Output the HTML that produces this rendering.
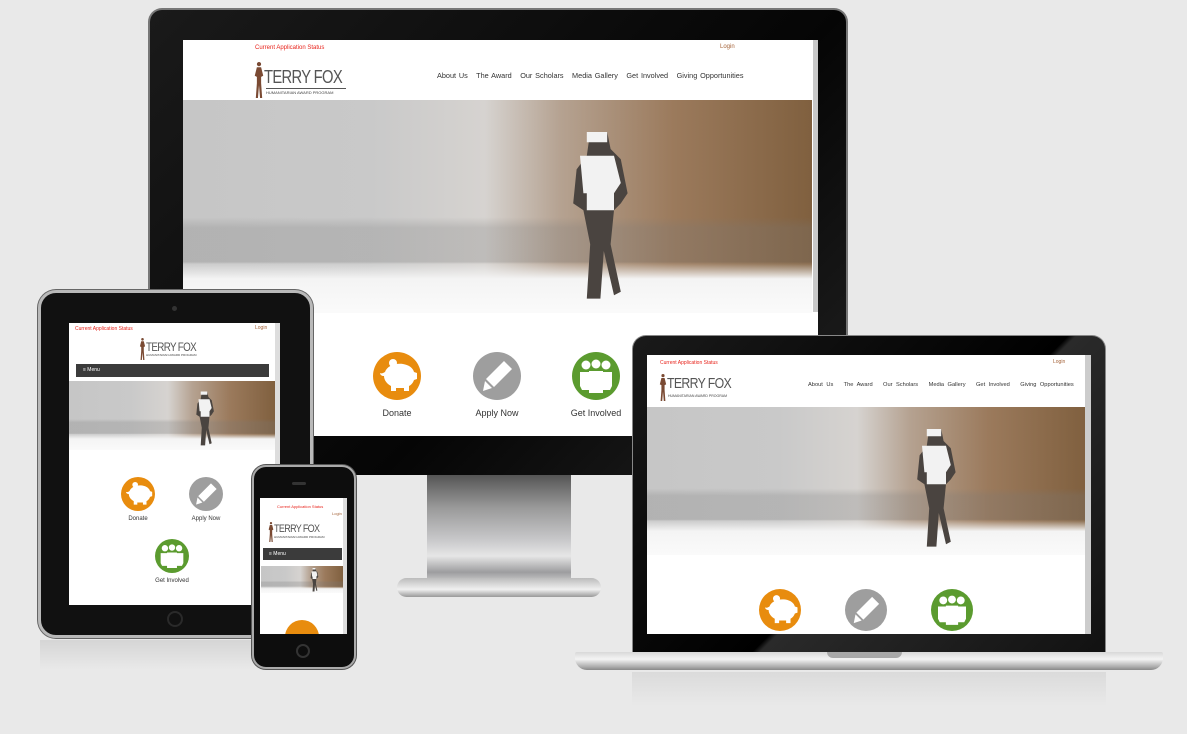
<!DOCTYPE html>
<html><head><meta charset="utf-8"><style>
*{margin:0;padding:0;box-sizing:border-box}
body{width:1187px;height:734px;background:#e9e9e9;position:relative;overflow:hidden;font-family:"Liberation Sans",sans-serif}
.a{position:absolute}
.scr{position:absolute;background:#fff;overflow:hidden}
.hero{position:absolute;overflow:hidden;background:
 linear-gradient(180deg,rgba(255,255,255,0) 0%,rgba(255,255,255,0) 76%,rgba(244,244,244,1) 84%,#fafafa 100%),
 linear-gradient(180deg,rgba(0,0,0,0) 0%,rgba(0,0,0,0) 55%,rgba(120,120,120,.25) 60%,rgba(120,120,120,.25) 76%,rgba(0,0,0,0) 77%),
 linear-gradient(90deg,#c6c6c6 0%,#c9c9c9 30%,#d6d3d0 48%,#b5a291 60%,#9b7a5c 78%,#80603f 100%);}
.red{color:#e8231b;position:absolute;white-space:nowrap}
.login{color:#a5643a;position:absolute;white-space:nowrap}
.nav{position:absolute;color:#333;white-space:nowrap}
.c{position:absolute;border-radius:50%}
.lbl{position:absolute;color:#333;text-align:center;white-space:nowrap}
.logo{position:absolute}
.tf{position:absolute;color:#555;letter-spacing:-0.8px;white-space:nowrap;transform-origin:0 0}
</style></head><body>
<svg width="0" height="0" style="position:absolute">
<defs>
<symbol id="pig" viewBox="0 0 48 48"><path fill="#fff" d="M12 20c2-6 10-9 18-8 6 1 10 4 11 8l3 1v6l-3 1c-1 3-3 5-5 6v5h-5v-3h-8v3h-5v-5c-4-2-7-6-7-10-2 0-4-1-4-3 2 1 3 0 5-1z"/><circle cx="20" cy="11" r="4" fill="#fff"/></symbol>
<symbol id="pen" viewBox="0 0 48 48"><path fill="#fff" d="M31 9l8 8-18 18-8-8zM12 29l7 7-9 3z"/></symbol>
<symbol id="ppl" viewBox="0 0 48 48"><g fill="#fff"><circle cx="14" cy="13" r="4.5"/><circle cx="24" cy="12" r="4.5"/><circle cx="34" cy="13" r="4.5"/><path d="M8 20h10v18H10l-2-4zM30 20h10v14l-2 4h-8zM17 19h14v22H17z"/></g></symbol>
<symbol id="fig" viewBox="0 0 10 34"><path fill="#7a4a33" d="M5 0a2 2 0 1 1 0 4 2 2 0 1 1 0-4zM3 5h4l2 8-2 1v6l1 14H6l-1-12-1 12H2l1-14v-6L1 13z"/></symbol>
<symbol id="stat" viewBox="0 0 20 50"><path fill="#4a4440" d="M8 0h5l1 5 3 3 2 10-2 3-2 2-1 10 3 14-2 1-3-13-1 14H7l1-16-2-10-3-2 1-10 3-4z"/><path fill="#f2f2f2" d="M7 0h6v3H7zM5 7h10l2 8-2 3H6zM7 18h8v5H7z"/></symbol>
</defs></svg>

<!-- reflections -->
<div class="a" style="left:40px;top:640px;width:272px;height:30px;background:linear-gradient(180deg,rgba(200,200,200,.6),rgba(233,233,233,0))"></div>
<div class="a" style="left:632px;top:672px;width:474px;height:34px;background:linear-gradient(180deg,rgba(215,215,215,.8),rgba(233,233,233,0))"></div>

<!-- MONITOR -->
<div class="a" style="left:148px;top:8px;width:700px;height:467px;background:linear-gradient(135deg,#1a1a1a,#050505 60%,#222);border-radius:14px 14px 0 0;border:2px solid #777;border-bottom:none"></div>
<div class="a" style="left:427px;top:475px;width:144px;height:108px;background:linear-gradient(180deg,#555 0%,#999 30%,#c8c8ca 60%,#e6e6e6 75%,#9d9d9f 90%,#cfcfcf 100%)"></div>
<div class="a" style="left:397px;top:578px;width:204px;height:19px;border-radius:10px;background:linear-gradient(180deg,#bbb,#f0f0f0 60%,#999)"></div>
<div class="scr" style="left:183px;top:40px;width:635px;height:396px">
 <div class="red" style="left:72px;top:5px;font-size:6px">Current Application Status</div>
 <div class="login" style="left:537px;top:4px;font-size:6px">Login</div>
 <svg class="logo" style="left:70px;top:22px" width="12" height="36"><use href="#fig"/></svg>
 <div class="tf" style="left:81px;top:27px;font-size:18px;transform:scaleX(.82)">TERRY FOX</div>
 <div class="a" style="left:83px;top:48px;width:80px;height:1px;background:#555"></div>
 <div class="a" style="left:83px;top:50px;font-size:4px;color:#444;white-space:nowrap">HUMANITARIAN AWARD PROGRAM</div>
 <div class="nav" style="left:254px;top:31px;font-size:7.3px;word-spacing:0.8px">About Us &nbsp; The Award &nbsp; Our Scholars &nbsp; Media Gallery &nbsp; Get Involved &nbsp; Giving Opportunities</div>
 <div class="hero" style="left:0;top:60px;width:629px;height:213px"></div>
 <svg class="a" style="left:378px;top:92px" width="72" height="170"><use href="#stat"/></svg>
 <div class="a" style="left:630px;top:0;width:5px;height:272px;background:#c8c8c8"></div>
 <div class="c" style="left:190px;top:312px;width:48px;height:48px;background:#e88c0e"><svg width="48" height="48"><use href="#pig"/></svg></div>
 <div class="c" style="left:290px;top:312px;width:48px;height:48px;background:#9e9e9e"><svg width="48" height="48"><use href="#pen"/></svg></div>
 <div class="c" style="left:389px;top:312px;width:48px;height:48px;background:#5b9b2f"><svg width="48" height="48"><use href="#ppl"/></svg></div>
 <div class="lbl" style="left:184px;top:368px;width:60px;font-size:9px">Donate</div>
 <div class="lbl" style="left:284px;top:368px;width:60px;font-size:9px">Apply Now</div>
 <div class="lbl" style="left:380px;top:368px;width:66px;font-size:9px">Get Involved</div>
</div>

<!-- TABLET -->
<div class="a" style="left:38px;top:290px;width:275px;height:348px;border-radius:18px;background:#111;border:3px solid #b9b9b9;box-shadow:0 0 0 1px #666"></div>
<div class="a" style="left:172px;top:306px;width:5px;height:5px;border-radius:50%;background:#333"></div>
<div class="a" style="left:167px;top:611px;width:16px;height:16px;border-radius:50%;border:2px solid #2a2a2a"></div>
<div class="scr" style="left:69px;top:323px;width:211px;height:282px">
 <div class="red" style="left:6px;top:3px;font-size:5px">Current Application Status</div>
 <div class="login" style="left:186px;top:2px;font-size:5px">Login</div>
 <svg class="logo" style="left:70px;top:15px" width="7" height="22"><use href="#fig"/></svg>
 <div class="tf" style="left:77px;top:17px;font-size:12px;transform:scaleX(.82)">TERRY FOX</div>
 <div class="a" style="left:77px;top:30px;font-size:3px;color:#444;white-space:nowrap">HUMANITARIAN AWARD PROGRAM</div>
 <div class="a" style="left:7px;top:41px;width:193px;height:13px;background:#3b3b3b;color:#fff;font-size:5px;padding:3px 0 0 7px">≡ Menu</div>
 <div class="hero" style="left:0;top:58px;width:206px;height:69px"></div>
 <svg class="a" style="left:124px;top:68px" width="22" height="56"><use href="#stat"/></svg>
 <div class="a" style="left:206px;top:0;width:5px;height:282px;background:#ddd"></div>
 <div class="c" style="left:52px;top:154px;width:34px;height:34px;background:#e88c0e"><svg width="34" height="34"><use href="#pig"/></svg></div>
 <div class="c" style="left:120px;top:154px;width:34px;height:34px;background:#9e9e9e"><svg width="34" height="34"><use href="#pen"/></svg></div>
 <div class="c" style="left:86px;top:216px;width:34px;height:34px;background:#5b9b2f"><svg width="34" height="34"><use href="#ppl"/></svg></div>
 <div class="lbl" style="left:44px;top:193px;width:50px;font-size:6px">Donate</div>
 <div class="lbl" style="left:112px;top:193px;width:50px;font-size:6px">Apply Now</div>
 <div class="lbl" style="left:78px;top:255px;width:50px;font-size:6px">Get Involved</div>
</div>

<!-- PHONE -->
<div class="a" style="left:252px;top:465px;width:104px;height:204px;border-radius:14px;background:#0d0d0d;border:2px solid #aaa;box-shadow:0 0 0 1px #555"></div>
<div class="a" style="left:292px;top:482px;width:14px;height:3px;border-radius:2px;background:#333"></div>
<div class="a" style="left:296px;top:644px;width:14px;height:14px;border-radius:50%;border:2px solid #333"></div>
<div class="scr" style="left:260px;top:498px;width:87px;height:136px">
 <div class="red" style="left:17px;top:6px;font-size:4px">Current Application Status</div>
 <div class="login" style="left:72px;top:13px;font-size:4px">Login</div>
 <svg class="logo" style="left:8px;top:24px" width="6" height="20"><use href="#fig"/></svg>
 <div class="tf" style="left:14px;top:25px;font-size:11px;transform:scaleX(.82)">TERRY FOX</div>
 <div class="a" style="left:14px;top:37px;font-size:3px;color:#444;white-space:nowrap">HUMANITARIAN AWARD PROGRAM</div>
 <div class="a" style="left:3px;top:50px;width:79px;height:12px;background:#3b3b3b;color:#fff;font-size:5px;padding:3px 0 0 6px">≡ Menu</div>
 <div class="hero" style="left:1px;top:68px;width:82px;height:27px"></div>
 <svg class="a" style="left:49px;top:70px" width="10" height="24"><use href="#stat"/></svg>
 <div class="a" style="left:83px;top:0;width:4px;height:136px;background:#ddd"></div>
 <div class="c" style="left:25px;top:122px;width:34px;height:34px;background:#e88c0e"></div>
</div>

<!-- LAPTOP -->
<div class="a" style="left:632px;top:335px;width:474px;height:320px;border-radius:14px 14px 0 0;background:linear-gradient(135deg,#1a1a1a,#000 55%,#2a2a2a 56%,#111);border:1px solid #888;border-bottom:none"></div>
<div class="a" style="left:575px;top:652px;width:588px;height:18px;border-radius:2px 2px 12px 12px;background:linear-gradient(180deg,#d8d8d8,#f4f4f4 40%,#b0b0b0 80%,#888)"></div>
<div class="a" style="left:827px;top:652px;width:75px;height:6px;border-radius:0 0 6px 6px;background:#a8a8a8"></div>
<div class="scr" style="left:647px;top:355px;width:444px;height:279px">
 <div class="red" style="left:13px;top:5px;font-size:5px">Current Application Status</div>
 <div class="login" style="left:406px;top:4px;font-size:5px">Login</div>
 <svg class="logo" style="left:12px;top:19px" width="8" height="27"><use href="#fig"/></svg>
 <div class="tf" style="left:20px;top:20px;font-size:15px;transform:scaleX(.82)">TERRY FOX</div>
 <div class="a" style="left:21px;top:39px;font-size:3.5px;color:#444;white-space:nowrap">HUMANITARIAN AWARD PROGRAM</div>
 <div class="nav" style="left:161px;top:27px;font-size:5.7px;word-spacing:1.9px">About Us &nbsp; The Award &nbsp; Our Scholars &nbsp; Media Gallery &nbsp; Get Involved &nbsp; Giving Opportunities</div>
 <div class="hero" style="left:0;top:52px;width:438px;height:148px"></div>
 <svg class="a" style="left:262px;top:74px" width="50" height="120"><use href="#stat"/></svg>
 <div class="a" style="left:438px;top:0;width:6px;height:279px;background:#ccc"></div>
 <div class="c" style="left:112px;top:234px;width:42px;height:42px;background:#e88c0e"><svg width="42" height="42"><use href="#pig"/></svg></div>
 <div class="c" style="left:198px;top:234px;width:42px;height:42px;background:#9e9e9e"><svg width="42" height="42"><use href="#pen"/></svg></div>
 <div class="c" style="left:284px;top:234px;width:42px;height:42px;background:#5b9b2f"><svg width="42" height="42"><use href="#ppl"/></svg></div>
</div>
</body></html>
